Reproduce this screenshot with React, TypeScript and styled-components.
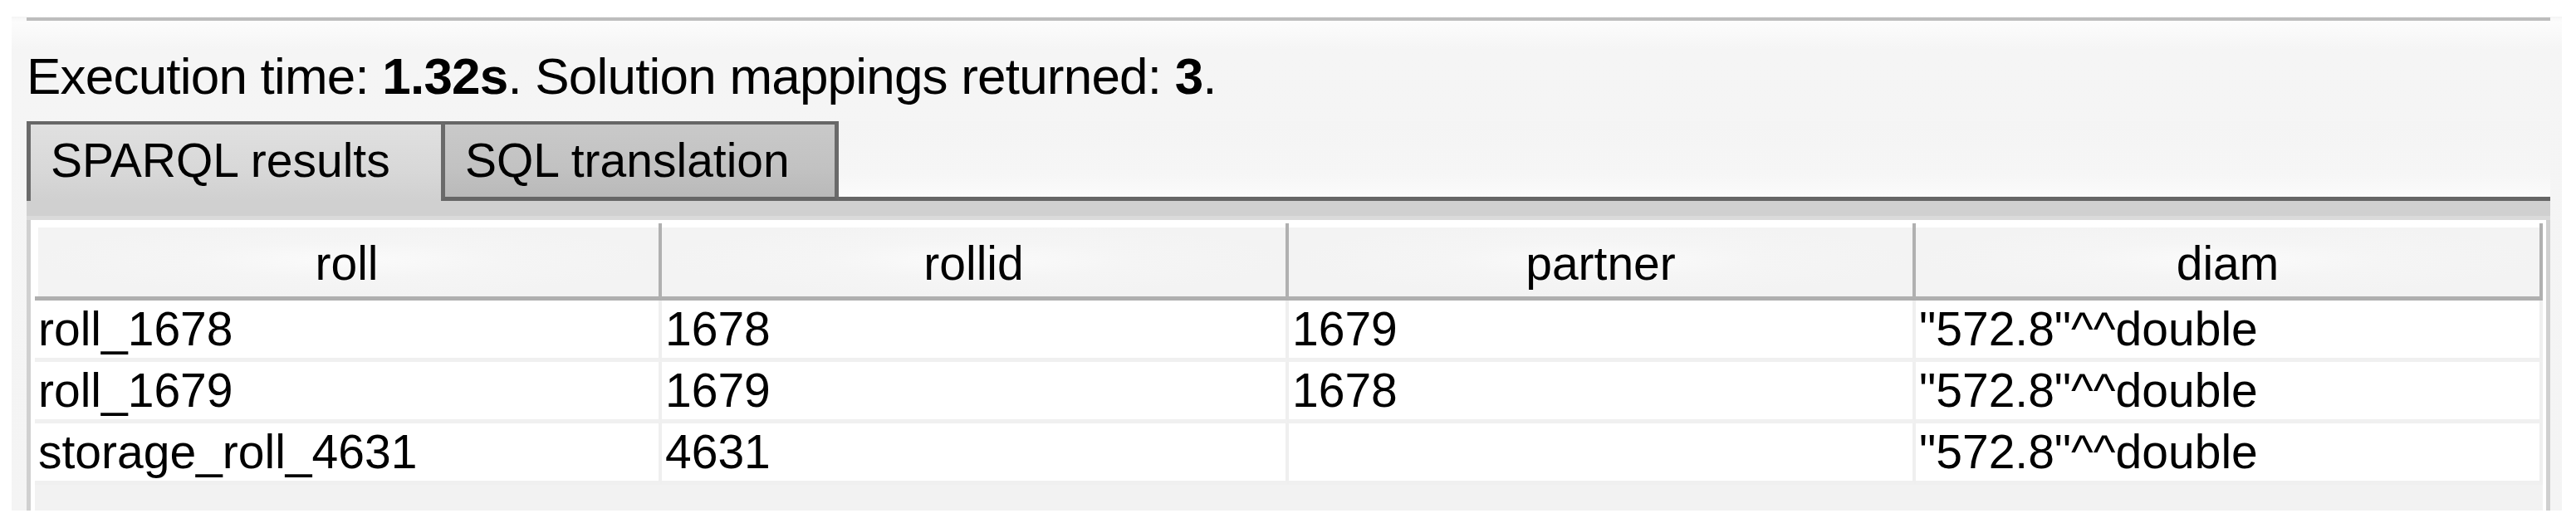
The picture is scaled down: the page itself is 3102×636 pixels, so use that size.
import React from "react";
import styled, { createGlobalStyle } from "styled-components";

const GlobalStyle = createGlobalStyle`
  html, body {
    margin: 0;
    padding: 0;
    background: #ffffff;
  }
  body {
    font-family: "Liberation Sans", Arial, sans-serif;
    color: #000;
  }
`;

const Panel = styled.div`
  box-sizing: border-box;
  margin: 20px 0 0 14px;
  width: 3071px;
  height: 595px;
  padding: 1px 14px 0 18px;
  display: flex;
  flex-direction: column;
  background: linear-gradient(#f4f4f4 0, #fcfcfc 6px, #f5f5f5 40px, #f4f4f4 100%);
`;

const TopRule = styled.div`
  height: 4px;
  flex-shrink: 0;
  background: #bdbdbd;
`;

const StatusText = styled.div`
  margin-top: 32px;
  font-size: 62px;
  line-height: 70px;
  letter-spacing: -0.8px;
  white-space: nowrap;
  flex-shrink: 0;
`;

const TabStrip = styled.div`
  margin-top: 19px;
  height: 96px;
  display: flex;
  flex-shrink: 0;
`;

const Tab = styled.div<{ $active?: boolean; $width: number }>`
  box-sizing: border-box;
  width: ${(p) => p.$width}px;
  height: 96px;
  padding: 6px 0 0 24px;
  border-top: 4px solid #676767;
  border-left: 5px solid #6a6a6a;
  font-size: 57px;
  line-height: 74px;
  white-space: nowrap;
  ${(p) =>
    p.$active
      ? `
    background: linear-gradient(#e0e0e0, #d8d8d8 60%, #d0d0d0);
  `
      : `
    background: linear-gradient(#c9c9c9, #c2c2c2 60%, #b9b9b9);
    border-right: 5px solid #6a6a6a;
    border-bottom: 5px solid #666666;
  `}
`;

const TabFill = styled.div`
  flex: 1;
  height: 96px;
  box-sizing: border-box;
  border-bottom: 5px solid #666666;
  background: linear-gradient(#f4f4f4, #f6f6f6 70%, #fbfbfb);
`;

const ContentPanel = styled.div`
  flex: 1;
  display: flex;
  flex-direction: column;
  padding: 23px 5px 0 5px;
  background: linear-gradient(#d0d0d0 0, #d0d0d0 18px, #dadada 18px, #dadada 23px, #d0d0d0 23px);
`;

const ScrollPane = styled.div`
  flex: 1;
  background: #f2f2f2;
  border-left: 5px solid #ffffff;
  border-right: 4px solid #ffffff;
`;

const HeaderRow = styled.div`
  display: grid;
  grid-template-columns: repeat(4, 1fr);
  padding-top: 4px;
  background: #ffffff;
`;

const HeaderCell = styled.div<{ $first?: boolean }>`
  height: 80px;
  padding-top: 8px;
  font-size: 57px;
  line-height: 80px;
  text-align: center;
  white-space: nowrap;
  background: radial-gradient(ellipse at center, #fbfbfb 0%, #f5f5f5 35%, #f3f3f3 70%);
  border-right: 4px solid #b0b0b0;
  border-bottom: 5px solid #afafaf;
  box-shadow: inset 0 5px 0 #ffffff
    ${(p) => (p.$first ? ", inset 4px 0 0 #ffffff" : "")};
`;

const BodyRow = styled.div`
  display: grid;
  grid-template-columns: repeat(4, 1fr);
  background: #ffffff;
`;

const BodyCell = styled.div`
  height: 69px;
  padding-left: 4px;
  font-size: 57px;
  line-height: 69px;
  white-space: nowrap;
  overflow: hidden;
  border-right: 4px solid #efefef;
  border-bottom: 5px solid #f0f0f0;
`;

const columns = ["roll", "rollid", "partner", "diam"];

const rows = [
  ["roll_1678", "1678", "1679", '"572.8"^^double'],
  ["roll_1679", "1679", "1678", '"572.8"^^double'],
  ["storage_roll_4631", "4631", "", '"572.8"^^double'],
];

const App: React.FC = () => {
  return (
    <>
      <GlobalStyle />
      <Panel>
        <TopRule />
        <StatusText>
          Execution time: <b>1.32s</b>. Solution mappings returned: <b>3</b>.
        </StatusText>
        <TabStrip>
          <Tab $active $width={499}>
            SPARQL results
          </Tab>
          <Tab $width={479}>SQL translation</Tab>
          <TabFill />
        </TabStrip>
        <ContentPanel>
          <ScrollPane>
            <HeaderRow>
              {columns.map((c, i) => (
                <HeaderCell key={c} $first={i === 0}>
                  {c}
                </HeaderCell>
              ))}
            </HeaderRow>
            {rows.map((r, i) => (
              <BodyRow key={i}>
                {r.map((v, j) => (
                  <BodyCell key={j}>{v}</BodyCell>
                ))}
              </BodyRow>
            ))}
          </ScrollPane>
        </ContentPanel>
      </Panel>
    </>
  );
};

export default App;
